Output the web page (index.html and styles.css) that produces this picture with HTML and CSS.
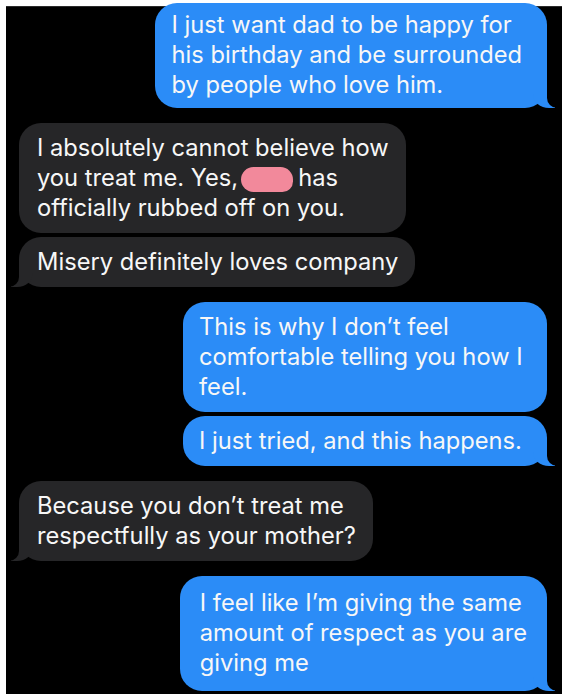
FILE: index.html
```html
<!DOCTYPE html>
<html lang="en">
<head>
<meta charset="utf-8">
<title>Messages</title>
<link rel="stylesheet" href="styles.css">
</head>
<body>
<div class="frame">
  <div class="thread">
    <div class="bubble sent tail first">I just want dad to be happy for<br>his birthday and be surrounded<br>by people who love him.</div>

    <div class="group">
      <div class="bubble recv">I absolutely cannot believe how<br>you treat me. Yes,<span class="redact"></span>has<br>officially rubbed off on you.</div>
      <div class="bubble recv tail">Misery definitely loves company</div>
    </div>

    <div class="group">
      <div class="bubble sent wide">This is why I don’t feel<br>comfortable telling you how I<br>feel.</div>
      <div class="bubble sent wide tail">I just tried, and this happens.</div>
    </div>

    <div class="bubble recv tail">Because you don’t treat me<br>respectfully as your mother?</div>

    <div class="bubble sent tail last">I feel like I’m giving the same<br>amount of respect as you are<br>giving me</div>
  </div>
</div>
</body>
</html>
```

FILE: styles.css
```css
* { box-sizing: border-box; }

html, body {
  margin: 0;
  padding: 0;
  background: #ffffff;
}

.frame {
  margin: 6px 0 0 6px;
  width: 556px;
  height: 688px;
  background: #000000;
  border-top: 1px solid #2b2b2b;
  overflow: visible;
}

.thread {
  display: flex;
  flex-direction: column;
  gap: 15px;
  padding: 0 15px 0 13px;
}

.group {
  display: flex;
  flex-direction: column;
  gap: 4px;
}

.bubble {
  position: relative;
  font-family: "Inter", "Noto Sans", sans-serif;
  font-size: 23.7px;
  line-height: 30px;
  color: #f7f7f7;
  padding: 10px 20px 10px 18px;
  border-radius: 22px;
  white-space: nowrap;
  width: fit-content;
}

.bubble.first {
  margin-top: -4px;
  padding: 7px 25px 8px 17px;
}

.bubble.last {
  padding: 12px 20px 13px 20px;
}

.sent {
  background: #2b8cf7;
  align-self: flex-end;
}

.sent.wide {
  width: 364px;
  padding-left: 16px;
}

.recv {
  background: #262628;
  align-self: flex-start;
  padding-right: 17px;
}

.redact {
  display: inline-block;
  width: 52px;
  height: 25px;
  margin: 0 5px 0 3px;
  vertical-align: -6px;
  background: #f2899b;
  border-radius: 13px 13px 11px 13px;
}

/* iMessage tails */
.tail::before,
.tail::after {
  content: "";
  position: absolute;
  bottom: 0;
  height: 22px;
}

.sent.tail::before {
  right: -8px;
  width: 22px;
  background: #2b8cf7;
  border-bottom-left-radius: 16px 14px;
}

.sent.tail::after {
  right: -12px;
  width: 12px;
  background: #000000;
  border-bottom-left-radius: 10px;
}

.recv.tail::before {
  left: -8px;
  width: 22px;
  background: #262628;
  border-bottom-right-radius: 16px 14px;
}

.recv.tail::after {
  left: -12px;
  width: 12px;
  background: #000000;
  border-bottom-right-radius: 10px;
}
```
